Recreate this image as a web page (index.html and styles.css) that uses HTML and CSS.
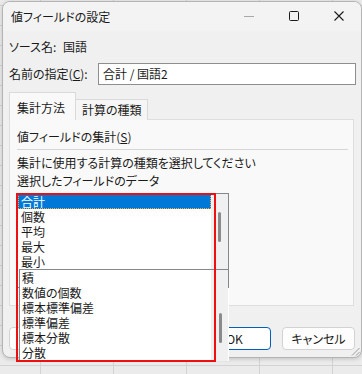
FILE: index.html
```html
<!DOCTYPE html>
<html lang="ja">
<head>
<meta charset="utf-8">
<title>値フィールドの設定</title>
<link rel="stylesheet" href="styles.css">
</head>
<body>
<div class="dialog">
  <div class="titlebar">
    <span class="title">値フィールドの設定</span>
    <div class="controls">
      <svg class="ctl" width="10" height="10" viewBox="0 0 10 10"><path d="M0 5.5H10" stroke="#a9a9a9" stroke-width="1"/></svg>
      <svg class="ctl" width="10" height="10" viewBox="0 0 10 10"><rect x="0.5" y="0.5" width="9" height="9" rx="1" fill="none" stroke="#1b1b1b" stroke-width="1"/></svg>
      <svg class="ctl" width="10" height="10" viewBox="0 0 10 10"><path d="M0.5 0.5L9.5 9.5M9.5 0.5L0.5 9.5" stroke="#1b1b1b" stroke-width="1.1"/></svg>
    </div>
  </div>
  <div class="content">
    <div class="source"><span class="src-label">ソース名:</span><span>国語</span></div>
    <div class="name">
      <span class="name-label">名前の指定(<u>C</u>):</span>
      <div class="input">合計 / 国語2</div>
    </div>
    <div class="tabs">
      <div class="tab active">集計方法</div>
      <div class="tab">計算の種類</div>
    </div>
    <div class="panel">
      <div class="group">値フィールドの集計(<u>S</u>)</div>
      <div class="desc">集計に使用する計算の種類を選択してください</div>
      <div class="desc">選択したフィールドのデータ</div>
      <div class="listbox">
        <div class="items">
          <div class="item sel">合計</div>
          <div class="item">個数</div>
          <div class="item">平均</div>
          <div class="item">最大</div>
          <div class="item">最小</div>
        </div>
        <div class="track"><div class="thumb thumb-a"></div></div>
      </div>
    </div>
    <div class="buttons">
      <button class="btn fmt" aria-label="表示形式"></button>
      <div class="btn-group">
        <button class="btn ok">OK</button>
        <button class="btn">キャンセル</button>
      </div>
    </div>
  </div>
  <svg class="grip" width="9" height="9" viewBox="0 0 9 9"><path d="M8.5 1L1 8.5M8.5 5L5 8.5" stroke="#9a9a9a" stroke-width="1"/></svg>
</div>

<div class="listbox-b">
  <div class="items-b">
    <div class="item">積</div>
    <div class="item">数値の個数</div>
    <div class="item">標本標準偏差</div>
    <div class="item">標準偏差</div>
    <div class="item">標本分散</div>
    <div class="item">分散</div>
  </div>
  <div class="track"><div class="thumb thumb-b"></div></div>
</div>
<div class="redbox"></div>
</body>
</html>
```
FILE: styles.css
```css
* { box-sizing: border-box; margin: 0; padding: 0; }
html, body { width: 362px; height: 374px; overflow: hidden; }
body {
  position: relative;
  padding: 1px 0 0 2px;
  font-family: "Noto Sans CJK JP", "Noto Sans", sans-serif;
  font-size: 12px;
  color: #1a1a1a;
  font-feature-settings: "palt";
  background-color: #ebebeb;
  background-image:
    linear-gradient(to bottom, transparent 5px, #d3d3d3 5px, #d3d3d3 6px, transparent 6px),
    linear-gradient(to right, #d3d3d3 1px, transparent 1px);
  background-size: 100% 20px, 73px 100%;
  background-position: 0 0, 40px 0;
}
u { text-underline-offset: 1px; }

.dialog {
  position: relative;
  width: 360px;
  height: 357px;
  border: 1px solid #b4b4b4;
  border-radius: 8px;
  background: #f0f0f0;
  overflow: hidden;
  box-shadow: 0 1px 4px rgba(0,0,0,0.18);
  display: flex;
  flex-direction: column;
}
.titlebar {
  height: 29px;
  flex: none;
  display: flex;
  align-items: center;
  justify-content: space-between;
  padding-left: 8px;
  background: #f3f3f3;
}
.title { line-height: 16px; }
.controls {
  display: flex;
  align-items: center;
  gap: 35px;
  padding-right: 17px;
  margin-top: -2px;
}
.ctl { display: block; }

.content { flex: 1; display: flex; flex-direction: column; }
.source {
  margin-top: 8px;
  padding-left: 6px;
  height: 16px;
  line-height: 16px;
}
.src-label { display: inline-block; width: 54px; }
.name {
  margin-top: 8px;
  padding-left: 6px;
  display: flex;
  align-items: center;
  height: 22px;
}
.name-label { width: 89px; flex: none; line-height: 16px; }
.input {
  width: 258px;
  height: 22px;
  border: 1px solid #8e8e8e;
  background: #fff;
  padding-left: 4px;
  line-height: 20px;
}

.tabs {
  position: relative;
  z-index: 1;
  margin-top: 7px;
  padding-left: 6px;
  height: 28px;
  display: flex;
  align-items: flex-end;
}
.tab {
  width: 72px;
  height: 21px;
  border: 1px solid #dadada;
  border-left: none;
  border-bottom: none;
  background: #f5f5f5;
  padding: 1px 0 0 6px;
  line-height: 18px;
}
.tab.active {
  width: 67px;
  height: 28px;
  border-left: 1px solid #dadada;
  background: #f9f9f9;
  padding: 6px 0 0 7px;
}
.panel {
  margin: -1px 0 0 6px;
  width: 345px;
  height: 187px;
  border: 1px solid #dedede;
  background: #f9f9f9;
  padding: 9px 5px 0 7px;
}
.group {
  line-height: 16px;
  padding-bottom: 4px;
  border-bottom: 1px solid #d6d6d6;
}
.desc { line-height: 18px; }
.group + .desc { margin-top: 4px; }
.listbox {
  margin-top: 3px;
  width: 212px;
  height: 95px;
  border: 1px solid #84878c;
  background: #fff;
  display: flex;
  overflow: hidden;
}
.items { width: 193px; flex: none; }
.item {
  height: 15px;
  line-height: 15px;
  padding-left: 3px;
  white-space: nowrap;
}
.item.sel {
  background: #0078d7;
  color: #fff;
  outline: 1px dotted #f0b040;
  outline-offset: -1px;
}
.track {
  position: relative;
  width: 17px;
  flex: none;
  background: #f0f0f0;
}
.thumb {
  position: absolute;
  width: 3px;
  height: 30px;
  border-radius: 2px;
  background: #8a8a8a;
}
.thumb-a { left: 7px; top: 18px; }
.thumb-b { left: 8px; top: 43px; }

.buttons {
  margin-top: 21px;
  padding: 0 6px;
  display: flex;
  justify-content: space-between;
}
.btn-group { display: flex; gap: 11px; }
.btn {
  width: 73px;
  height: 23px;
  border: 1px solid #d2d2d2;
  border-radius: 4px;
  background: #fdfdfd;
  font-family: inherit;
  font-size: 12px;
  color: #1a1a1a;
  font-feature-settings: "palt";
}
.btn.ok { border-color: #005fb8; background: #fff; }
.btn.fmt { width: 100px; }
.grip { position: absolute; right: 1px; bottom: 1px; }

.listbox-b {
  position: absolute;
  left: 19px;
  top: 269px;
  width: 210px;
  height: 92px;
  border-top: 1px solid #84878c;
  border-left: 1px solid #84878c;
  background: #fff;
  display: flex;
  z-index: 2;
}
.listbox-b::after {
  content: "";
  position: absolute;
  right: 0;
  top: -1px;
  width: 1px;
  height: 19px;
  background: #84878c;
}
.items-b { width: 191px; flex: none; }
.listbox-b .item { padding-left: 2px; }
.redbox {
  position: absolute;
  left: 16px;
  top: 193px;
  width: 200px;
  height: 169px;
  border: 2px solid #ee1010;
  z-index: 3;
}
```
